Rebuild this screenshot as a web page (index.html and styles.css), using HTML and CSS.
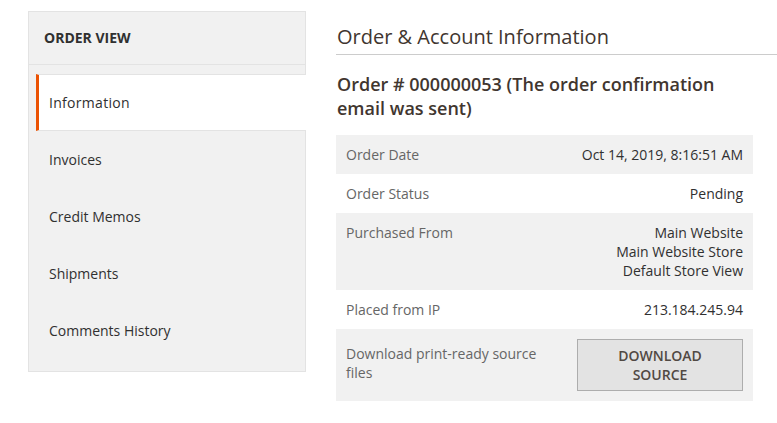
FILE: index.html
```html
<!DOCTYPE html>
<html lang="en">
<head>
<meta charset="utf-8">
<title>Order View</title>
<link rel="stylesheet" href="styles.css">
</head>
<body>
<div class="page">
  <aside class="nav">
    <div class="nav-title">Order View</div>
    <ul class="nav-list">
      <li class="nav-item active">Information</li>
      <li class="nav-item">Invoices</li>
      <li class="nav-item">Credit Memos</li>
      <li class="nav-item">Shipments</li>
      <li class="nav-item">Comments History</li>
    </ul>
  </aside>
  <main class="main">
    <h2 class="section-title">Order &amp; Account Information</h2>
    <h3 class="order-title">Order # 000000053 (The order confirmation email was sent)</h3>
    <table class="info-table">
      <tr class="shade">
        <th>Order Date</th>
        <td>Oct 14, 2019, 8:16:51 AM</td>
      </tr>
      <tr>
        <th>Order Status</th>
        <td>Pending</td>
      </tr>
      <tr class="shade">
        <th>Purchased From</th>
        <td>Main Website<br>Main Website Store<br>Default Store View</td>
      </tr>
      <tr>
        <th>Placed from IP</th>
        <td>213.184.245.94</td>
      </tr>
      <tr class="shade middle">
        <th>Download print-ready source files</th>
        <td><button class="btn" type="button">Download Source</button></td>
      </tr>
    </table>
  </main>
</div>
</body>
</html>
```
FILE: styles.css
```css
* { box-sizing: border-box; }
html, body { margin: 0; padding: 0; background: #fff; }
body {
  font-family: "Open Sans", "Liberation Sans", sans-serif;
  font-size: 14px;
  color: #303030;
}
.page {
  display: flex;
  align-items: flex-start;
  gap: 30px;
  padding: 11px 0 0 28px;
}
.nav {
  width: 278px;
  flex: 0 0 278px;
  background: #f1f1f1;
  border: 1px solid #e3e3e3;
  padding-bottom: 12px;
}
.nav-title {
  height: 53px;
  line-height: 52px;
  padding-left: 15px;
  border-bottom: 1px solid #e3e3e3;
  font-weight: 700;
  text-transform: uppercase;
  color: #303030;
}
.nav-list {
  list-style: none;
  margin: 9px -1px 0 7px;
  padding: 0;
}
.nav-item {
  height: 57px;
  line-height: 55px;
  border-top: 1px solid transparent;
  border-bottom: 1px solid transparent;
  border-left: 3px solid transparent;
  padding-left: 10px;
  color: #303030;
  font-size: 14px;
}
.nav-item.active {
  background: #fff;
  border-top-color: #e3e3e3;
  border-bottom-color: #e3e3e3;
  border-left-color: #eb5202;
  letter-spacing: 0.3px;
}
.main {
  flex: 1;
  min-width: 0;
}
.section-title {
  margin: 12px 0 0;
  font-size: 20px;
  font-weight: 400;
  line-height: 28px;
  padding: 0 0 3px 1px;
  border-bottom: 1px solid #cccccc;
  color: #41362f;
}
.order-title {
  max-width: 417px;
  margin: 17px 0 15px;
  font-size: 18px;
  font-weight: 600;
  line-height: 24px;
  padding-left: 1px;
  color: #41362f;
}
.info-table {
  width: 417px;
  border-collapse: collapse;
}
.info-table th,
.info-table td {
  padding: 10px;
  line-height: 19px;
  font-size: 14px;
  vertical-align: top;
}
.info-table .middle th,
.info-table .middle td {
  vertical-align: middle;
}
.info-table .middle th {
  padding-top: 8px;
  padding-bottom: 12px;
}
.info-table th {
  width: 231px;
  text-align: left;
  font-weight: 400;
  color: #666666;
}
.info-table td {
  text-align: right;
  color: #303030;
}
.shade { background: #f1f1f1; }
.btn {
  display: block;
  width: 100%;
  padding: 6px 18px;
  background: #e3e3e3;
  border: 1px solid #adadad;
  font-family: inherit;
  font-size: 14px;
  font-weight: 600;
  line-height: 19px;
  text-transform: uppercase;
  color: #514943;
  text-align: center;
}
```
